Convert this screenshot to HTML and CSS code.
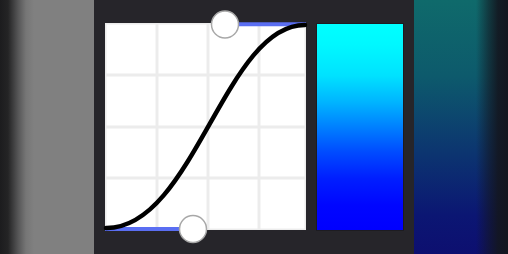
FILE: index.html
```html
<!DOCTYPE html>
<html lang="en">
<head>
<meta charset="UTF-8">
<meta name="viewport" content="width=device-width, initial-scale=1.0">
<title>Easing Curve</title>
<link rel="stylesheet" href="styles.css">
</head>
<body>
<div class="side side-left"></div>
<div class="panel">
  <div class="graph">
    <svg class="curve" width="201" height="207" viewBox="0 0 201 207">
      <rect x="0" y="0" width="201" height="207" fill="#ffffff"/>
      <!-- grid -->
      <g stroke="#ececec" stroke-width="3">
        <line x1="52" y1="0" x2="52" y2="207"/>
        <line x1="103" y1="0" x2="103" y2="207"/>
        <line x1="154" y1="0" x2="154" y2="207"/>
        <line x1="0" y1="52" x2="201" y2="52"/>
        <line x1="0" y1="104" x2="201" y2="104"/>
        <line x1="0" y1="155" x2="201" y2="155"/>
      </g>
      <rect x="0.75" y="0.75" width="199.5" height="205.5" fill="none" stroke="#ececec" stroke-width="1.5"/>
      <!-- control arms -->
      <line x1="120" y1="1.3" x2="201" y2="1.3" stroke="#5a6ef2" stroke-width="4"/>
      <line x1="0" y1="206" x2="88" y2="206" stroke="#5a6ef2" stroke-width="4"/>
      <!-- curve -->
      <path d="M 1 205 C 88 206, 120 1.5, 200 2" fill="none" stroke="#000" stroke-width="4.5" stroke-linecap="round"/>
      <!-- handles -->
      <circle cx="120" cy="1.5" r="13.5" fill="#fff" stroke="#a8a8a8" stroke-width="1.5"/>
      <circle cx="88" cy="206" r="13.5" fill="#fff" stroke="#a8a8a8" stroke-width="1.5"/>
    </svg>
  </div>
  <div class="preview"></div>
</div>
<div class="side side-right"></div>
</body>
</html>
```

FILE: styles.css
```css
body {
  margin: 0;
  padding: 0;
  width: 508px;
  height: 254px;
  display: flex;
  overflow: hidden;
  background-color: #26252a;
}

.side {
  width: 94px;
  height: 254px;
  flex-shrink: 0;
}

.side-left {
  background: linear-gradient(to right, #1c1c1e 0px, #242425 8px, #555556 18px, #767676 26px, #808080 34px, #808080 100%);
}

.side-right {
  background:
    linear-gradient(to right, rgba(19, 22, 31, 0) 0px, rgba(19, 22, 31, 0) 62px, rgba(19, 22, 31, 0.55) 74px, rgba(19, 22, 31, 0.92) 84px, #13161f 94px),
    linear-gradient(to bottom, #0f6a6b 0%, #0d5a6c 30%, #0c3570 60%, #0b1673 85%, #0d0f70 100%);
}

.panel {
  width: 320px;
  height: 254px;
  flex-shrink: 0;
  box-sizing: border-box;
  padding: 23px 10px 0 11px;
  display: flex;
  gap: 10px;
  align-items: flex-start;
  background-color: #26252a;
}

.graph {
  width: 201px;
  height: 207px;
}

.curve {
  display: block;
  overflow: visible;
}

.preview {
  width: 88px;
  height: 208px;
  box-sizing: border-box;
  border: 1px solid #1d1c21;
  background: linear-gradient(to bottom, #00ffff 0%, #00f8ff 10%, #00e2ff 25%, #00b4ff 38%, #0080ff 50%, #004cff 62%, #001eff 75%, #0006ff 88%, #0000ff 100%);
}
```
